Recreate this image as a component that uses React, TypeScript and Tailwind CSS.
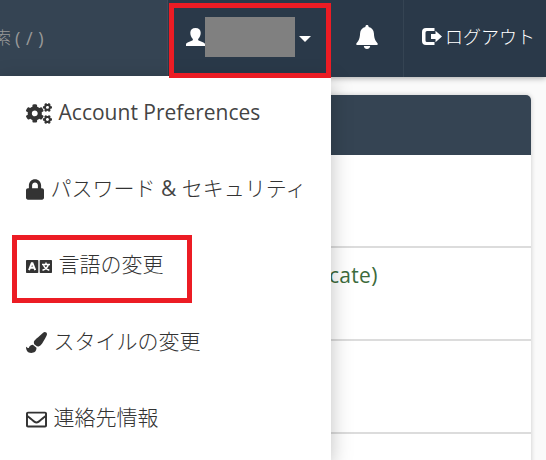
import type { ReactNode } from 'react'
import { FaCogs, FaLock, FaPaintBrush, FaRegEnvelope } from 'react-icons/fa'

const UserIcon = () => (
	<svg width="19" height="18" viewBox="0 0 19 18" fill="currentColor">
		<path d="M9.500 0C6.300 0 4.300 1.800 4.300 4.800c0 2.300.9 4.500 2.300 5.900.5.6.4 1.500-.3 1.900L1.600 14.600C.5 15.100 0 15.700 0 16.600V18h19v-1.400c0-.9-.5-1.500-1.600-2l-4.700-2c-.7-.4-.8-1.300-.3-1.900 1.400-1.400 2.300-3.600 2.300-5.900C14.700 1.800 12.700 0 9.500 0z" />
	</svg>
)

const BellIcon = () => (
	<svg width="22" height="24" viewBox="0 0 22 24" fill="currentColor">
		<path d="M11 0c-1 0-1.600.7-1.600 1.500v.6C6.200 2.800 4.300 5 4.100 8.300 3.900 12 3.400 14 2.200 16L.5 18.200c-.5.8-.2 1.800.8 1.800h19.400c1 0 1.300-1 .8-1.800L19.800 16c-1.200-2-1.700-4-1.900-7.700-.2-3.300-2.100-5.500-5.300-6.200v-.6C12.600.7 12 0 11 0zM7.800 21c.2 1.800 1.500 3 3.200 3s3-1.200 3.200-3z" />
	</svg>
)

const LogoutIcon = () => (
	<svg width="20" height="17" viewBox="0 0 20 17" fill="currentColor">
		<path d="M12.500 0H4a4 4 0 0 0-4 4v9a4 4 0 0 0 4 4h8.500v-3H5a1.500 1.500 0 0 1-1.500-1.500v-8A1.500 1.500 0 0 1 5 3h7.500z" />
		<path d="M13.500 2.800V6H9v5h4.500v3.200L20 8.500z" />
	</svg>
)

const LanguageIcon = () => (
	<svg width="26" height="13" viewBox="0 0 26 13">
		<rect width="12.300" height="13" rx=".7" fill="#333" />
		<rect x="13.700" width="12.300" height="13" rx=".7" fill="#333" />
		<path
			d="M3 10.200 5.700 3.300h.8L9.200 10.200M4.200 7.800h3.800"
			fill="none"
			stroke="#fff"
			strokeWidth="1.900"
		/>
		<path
			d="M16 4.600h8M20 2.600v2M22.300 4.800c-.8 2.600-2.600 4.400-5.800 5.500M17.600 5.300c.9 2.400 2.700 4 5.700 5"
			fill="none"
			stroke="#fff"
			strokeWidth="1.500"
		/>
	</svg>
)

interface MenuItemProps {
	icon: ReactNode
	children: ReactNode
}

const MenuItem = ({ icon, children }: MenuItemProps) => (
	<li className="flex h-[76.5px] items-center gap-[7px] pl-[25.600px] text-[#333]">
		{icon}
		<span className="pb-[3px] text-[21px] leading-none font-light whitespace-nowrap">
			{children}
		</span>
	</li>
)

const Header = () => (
	<header className="flex h-[77px] bg-[#2a3949] text-white shadow-[0_1px_6px_rgba(0,0,0,0.35)]">
		<div className="flex h-[76px] w-[168px] items-center border-r border-[#3f4c5a] bg-[#354453] text-[17px] text-[#999]">
			<span className="-ml-[6px] font-light whitespace-nowrap">索</span>
			<span className="ml-1 font-['Open_Sans',sans-serif] text-lg [word-spacing:1px] whitespace-nowrap">
				( / )
			</span>
		</div>
		<div className="flex w-[163px] items-center pl-[18px]">
			<span className="pb-[3px]">
				<UserIcon />
			</span>
			<span className="mb-[3px] h-10 w-[90px] bg-[#808080]" />
			<span className="ml-1 border-x-[6px] border-t-[6px] border-x-transparent border-t-white" />
		</div>
		<div className="flex w-[73px] items-center justify-center border-r border-[#354453] pb-[3px]">
			<BellIcon />
		</div>
		<div className="flex items-center pb-1 pl-[18px]">
			<LogoutIcon />
			<span className="ml-[3px] text-lg leading-none font-light whitespace-nowrap">
				ログアウト
			</span>
		</div>
	</header>
)

const UserMenu = () => (
	<div className="absolute top-[76px] left-0 h-[384px] w-[331px] bg-white shadow-[0_6px_20px_rgba(0,0,0,0.25)]">
		<ul className="-mt-px">
			<MenuItem icon={<FaCogs className="h-[21px] w-[26px]" />}>
				<span className="relative top-px font-normal text-[#444]">
					Account Preferences
				</span>
			</MenuItem>
			<MenuItem icon={<FaLock className="h-[21px] w-[18px]" />}>
				パスワード <span className="font-normal text-[#444]">&amp;</span>{' '}
				セキュリティ
			</MenuItem>
			<MenuItem icon={<LanguageIcon />}>言語の変更</MenuItem>
			<MenuItem icon={<FaPaintBrush className="size-[21px]" />}>
				スタイルの変更
			</MenuItem>
			<MenuItem icon={<FaRegEnvelope className="size-[21px]" />}>
				連絡先情報
			</MenuItem>
		</ul>
	</div>
)

const Results = () => (
	<main className="pt-[18px] pr-[15px]">
		<section className="rounded-t-[5px] bg-white shadow-[0_0_5px_rgba(0,0,0,0.2)]">
			<div className="h-[60px] rounded-t-[5px] bg-[#354453]" />
			<div className="h-[93px] border-b-2 border-[#dcdcdc]" />
			<div className="h-[93px] border-b-2 border-[#dcdcdc] pt-[13px] pl-[329px] text-[21px] leading-7 font-medium tracking-[0.3px] text-[#3c6b3c]">
				cate)
			</div>
			<div className="h-[93px] border-b-2 border-[#dcdcdc]" />
			<div className="h-[93px]" />
		</section>
	</main>
)

export default function App() {
	return (
		<div className="relative h-[460px] w-[546px] overflow-hidden bg-[#fafafa] font-['Open_Sans','Noto_Sans_CJK_JP',sans-serif]">
			<Header />
			<Results />
			<UserMenu />
			<div className="absolute top-[3px] left-[169px] h-[75px] w-[162px] border-5 border-[#ec1c24]" />
			<div className="absolute top-[235px] left-3 h-[68px] w-[180px] border-5 border-[#ec1c24]" />
		</div>
	)
}
